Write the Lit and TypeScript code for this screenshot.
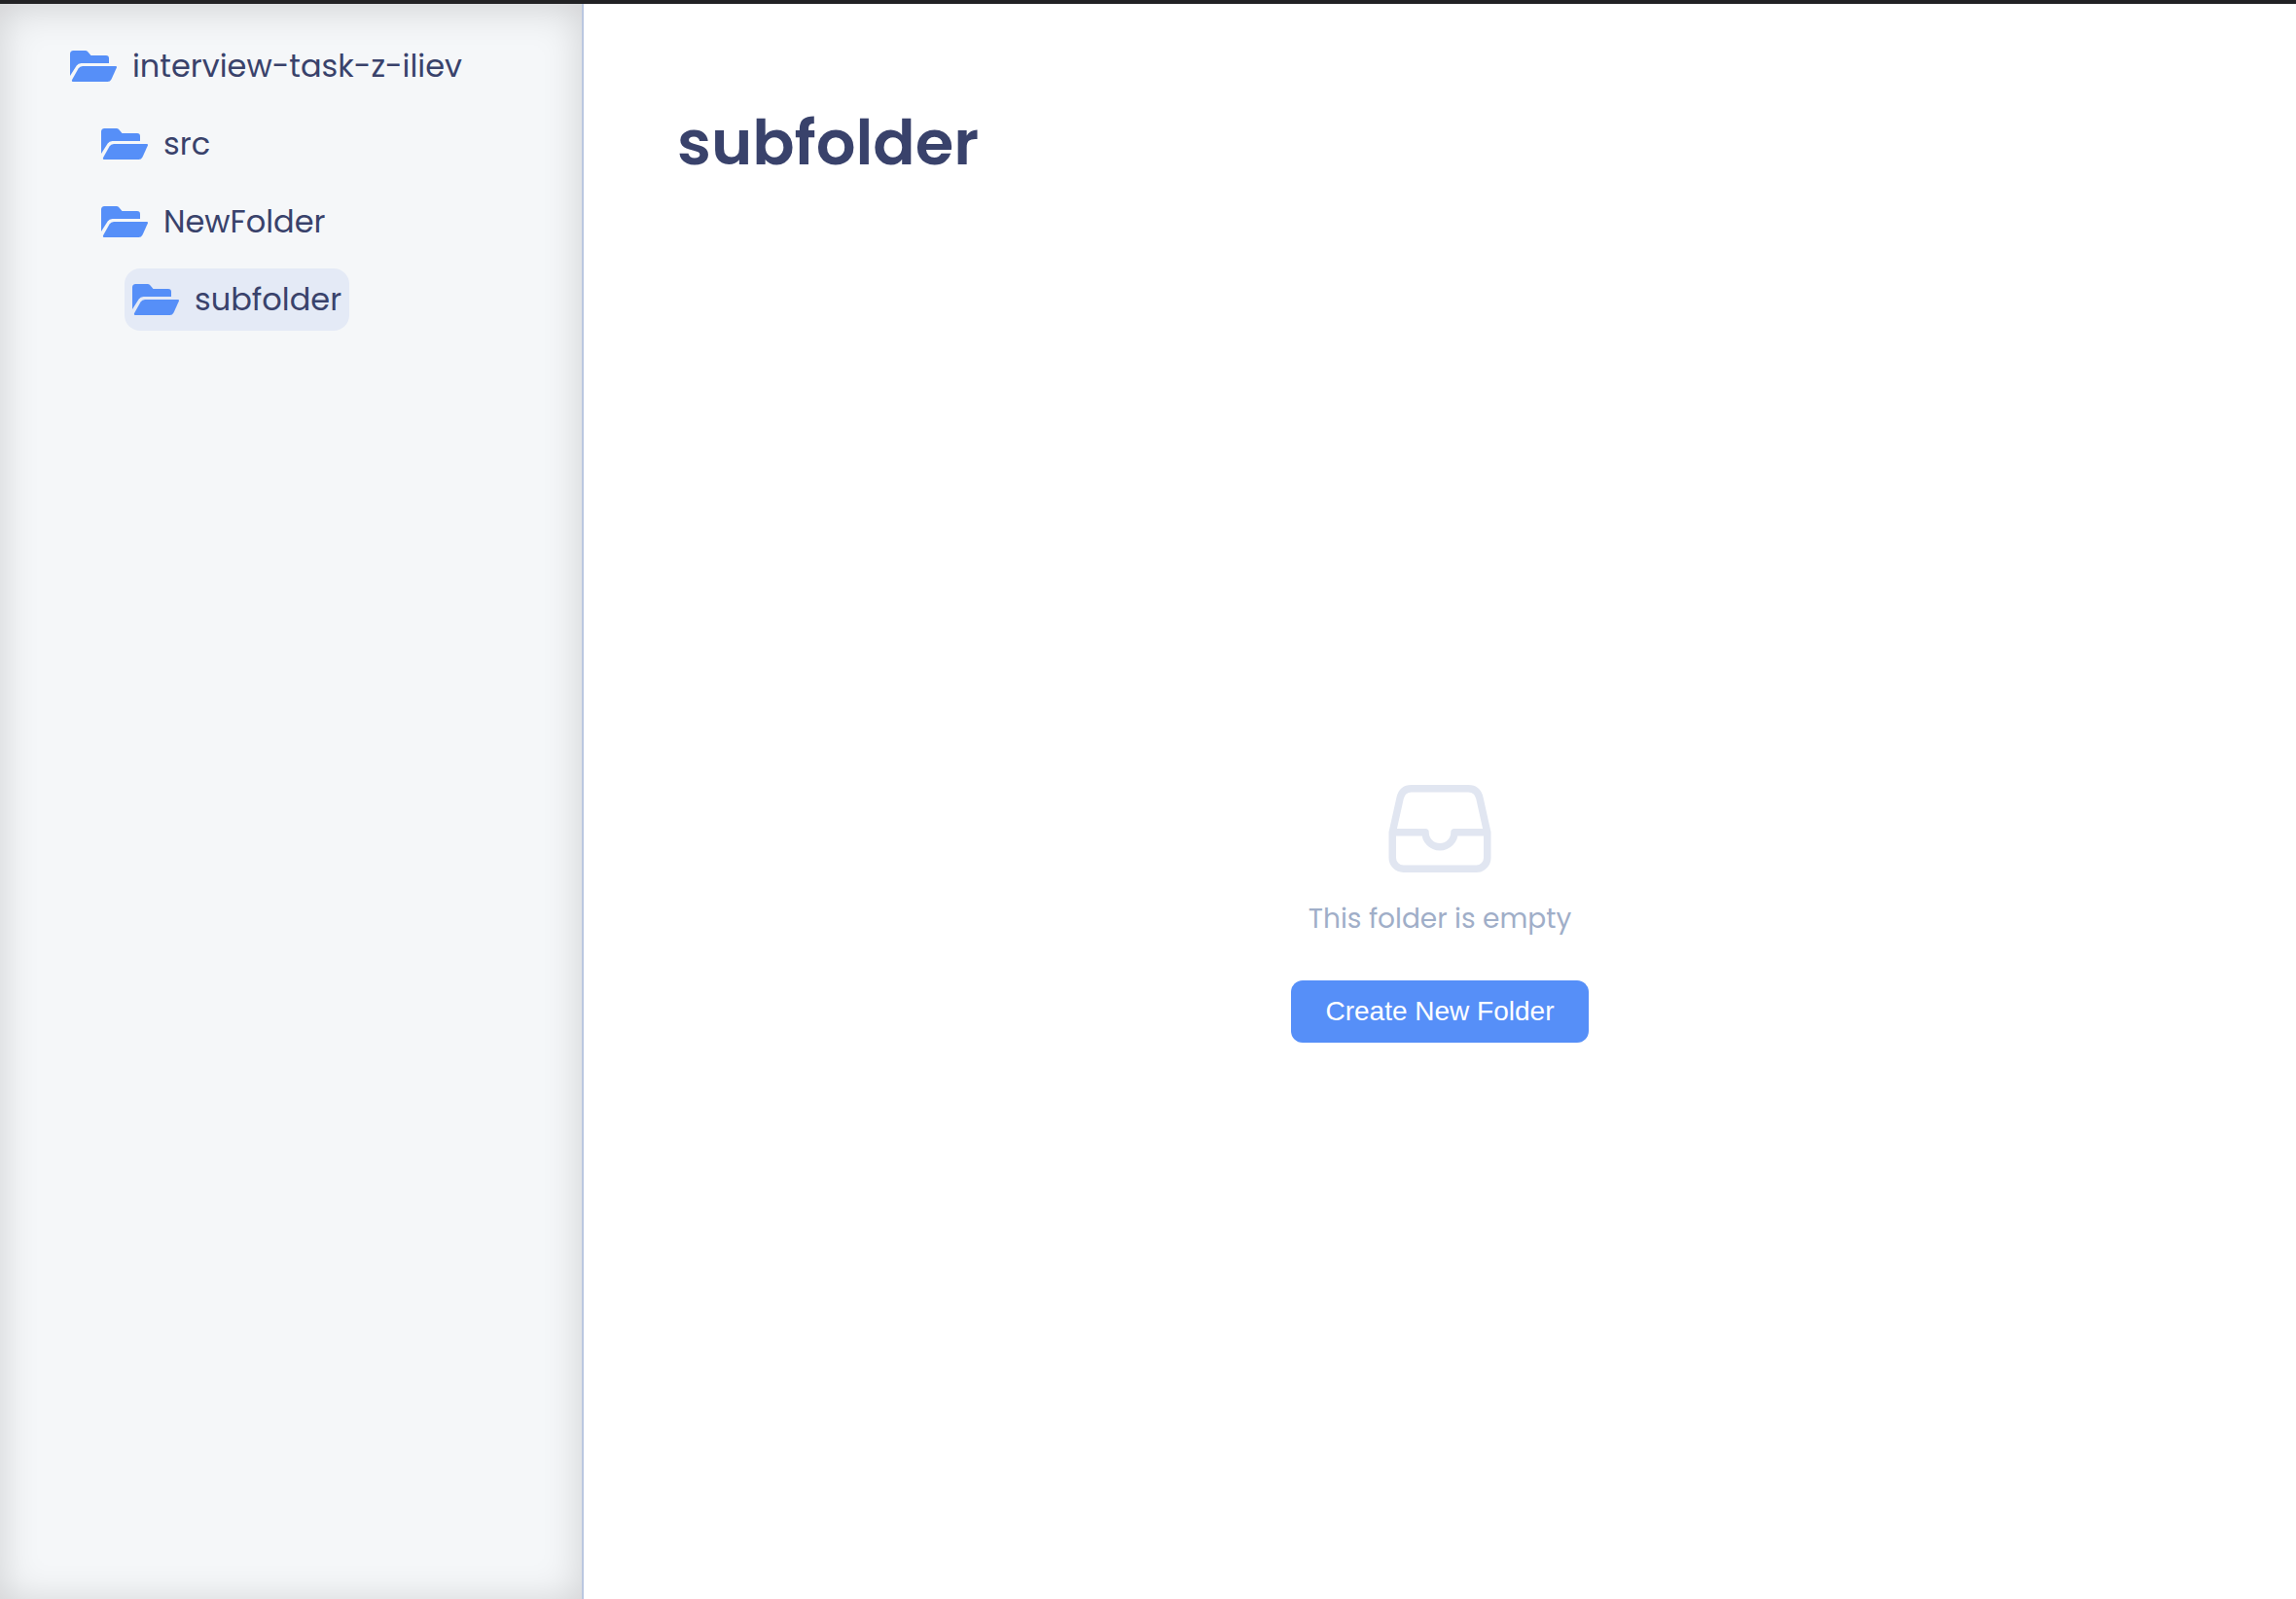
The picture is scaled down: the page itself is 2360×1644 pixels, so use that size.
import { LitElement, html, css, svg } from "lit";
import { customElement, property, state } from "lit/decorators.js";

interface Folder {
  id: string;
  name: string;
  children: Folder[];
}

const TREE: Folder = {
  id: "root",
  name: "interview-task-z-iliev",
  children: [
    { id: "src", name: "src", children: [] },
    {
      id: "new",
      name: "NewFolder",
      children: [{ id: "sub", name: "subfolder", children: [] }],
    },
  ],
};

const folderIcon = svg`
  <path d="M0 26V3.500Q0 0 3.500 0H15.500Q17.300 0 18.300 1.200L21.500 5H37Q40 5 40 8V13H11.500Q8.300 13 6.700 15.500Z" />
  <path d="M13 16H47Q48.500 16 47.900 17.600L42.500 29.500Q41.200 32 38.500 32H3Q1.300 32 2.100 30L8.500 18.500Q10 16 13 16Z" />
`;

@customElement("folder-tree")
class FolderTree extends LitElement {
  @property({ attribute: false }) folder: Folder = TREE;
  @property() selected = "";

  static styles = css`
    :host {
      display: block;
    }
    ul {
      list-style: none;
      margin: 0;
      padding: 0;
    }
    .branch {
      padding-left: 32px;
    }
    .row {
      display: flex;
      align-items: center;
      gap: 16px;
      height: 64px;
      margin-bottom: 16px;
      padding: 0 8px;
      border: 0;
      border-radius: 16px;
      background: none;
      color: #39426b;
      font: 400 32px/48px Poppins, Inter, sans-serif;
      white-space: nowrap;
      cursor: pointer;
    }
    .row.active {
      background: #e4eaf6;
    }
    .icon {
      flex: none;
      width: 48px;
      height: 32px;
      fill: #568ff8;
    }
  `;

  private pick(id: string) {
    this.dispatchEvent(
      new CustomEvent("folder-select", { detail: id, bubbles: true, composed: true })
    );
  }

  private renderNode(node: Folder): unknown {
    const active = node.id === this.selected;
    return html`<li>
      <button class="row ${active ? "active" : ""}" type="button" @click=${() => this.pick(node.id)}>
        <svg class="icon" viewBox="0 0 48 32" aria-hidden="true">${folderIcon}</svg>
        <span>${node.name}</span>
      </button>
      ${node.children.length
        ? html`<ul class="branch">${node.children.map((c) => this.renderNode(c))}</ul>`
        : ""}
    </li>`;
  }

  render() {
    return html`<ul>${this.renderNode(this.folder)}</ul>`;
  }
}

@customElement("empty-folder")
class EmptyFolder extends LitElement {
  static styles = css`
    :host {
      display: flex;
      flex-direction: column;
      align-items: center;
    }
    .icon {
      width: 120px;
      height: 120px;
      fill: none;
      stroke: #e1e6f1;
      stroke-linecap: round;
      stroke-linejoin: round;
    }
    .message {
      margin: 12px 0 42px;
      color: #a0aec8;
      font: 400 28px/42px Poppins, Inter, sans-serif;
    }
    .create {
      height: 64px;
      padding: 0 36px;
      border: 0;
      border-radius: 12px;
      background: #568ff8;
      color: #fff;
      font: 400 28px/32px "Liberation Sans", Arial, sans-serif;
      cursor: pointer;
    }
  `;

  render() {
    return html`
      <svg class="icon" viewBox="0 0 16 16" aria-hidden="true">
        <path d="M1.500 8.500L2.550 3.800Q2.850 2.500 4.100 2.500H11.900Q13.150 2.500 13.450 3.800L14.500 8.500V12A1.500 1.500 0 0 1 13 13.500H3A1.500 1.500 0 0 1 1.500 12ZH6A2 2 0 0 0 10 8.500H14.500" />
      </svg>
      <p class="message">This folder is empty</p>
      <button class="create" type="button">Create New Folder</button>
    `;
  }
}

@customElement("app-root")
class AppRoot extends LitElement {
  @state() private selected = "sub";

  static styles = css`
    :host {
      display: grid;
      grid-template-columns: 600px 1fr;
      box-sizing: border-box;
      min-height: 100vh;
      border-top: 4px solid #222224;
      background: #fff;
    }
    .sidebar {
      padding: 32px 64px;
      border-right: 2px solid #bac7e0;
      background: #f5f7f9;
      box-shadow: inset 0 4px 40px rgba(0, 0, 0, 0.16);
    }
    .content {
      display: flex;
      flex-direction: column;
      gap: 26px;
      padding: 96px 96px 0;
    }
    .title {
      margin: 0;
      color: #39426b;
      font: 600 64px/94px Poppins, Inter, sans-serif;
    }
    .empty {
      flex: 1;
      justify-content: center;
    }
  `;

  private find(node: Folder, id: string): Folder | undefined {
    if (node.id === id) return node;
    for (const child of node.children) {
      const hit = this.find(child, id);
      if (hit) return hit;
    }
    return undefined;
  }

  render() {
    return html`
      <nav class="sidebar" aria-label="Folders">
        <folder-tree
          .folder=${TREE}
          .selected=${this.selected}
          @folder-select=${(e: CustomEvent<string>) => (this.selected = e.detail)}
        ></folder-tree>
      </nav>
      <main class="content">
        <h1 class="title">${this.find(TREE, this.selected)?.name}</h1>
        <empty-folder class="empty"></empty-folder>
      </main>
    `;
  }
}
